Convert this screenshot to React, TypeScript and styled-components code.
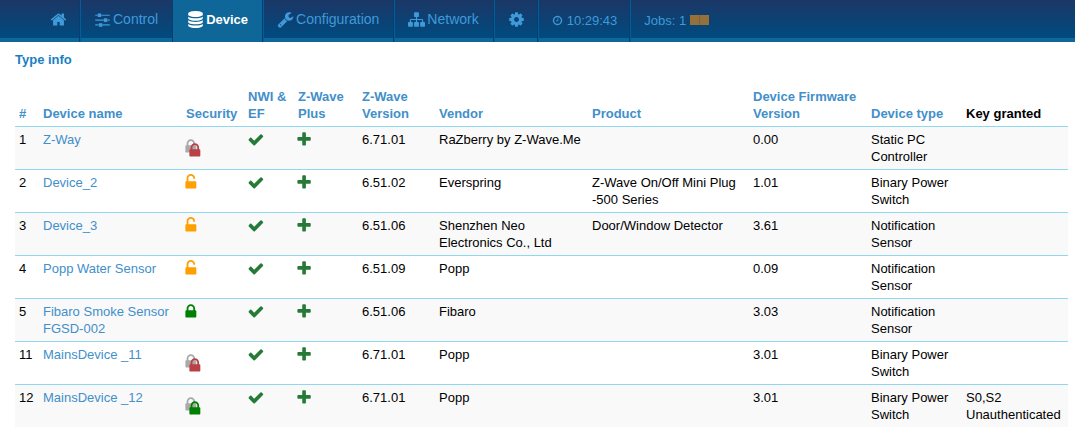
import React from "react";
import styled, { createGlobalStyle } from "styled-components";

const Global = createGlobalStyle`
  *, *::before, *::after { box-sizing: border-box; }
  body {
    margin: 0;
    background: #fff;
    color: #000;
    font-family: "Liberation Sans", Arial, sans-serif;
    font-size: 13px;
    line-height: 17px;
  }
`;

const glyphs = {
  home: "M1472 992v480q0 26-19 45t-45 19h-384v-384h-256v384h-384q-26 0-45-19t-19-45v-480q0-1 .5-3t.5-3l575-474 575 474q1 2 1 6zm223-69l-62 74q-8 9-21 11h-3q-13 0-21-7l-692-577-692 577q-12 8-24 7-13-2-21-11l-62-74q-8-10-7-23.500t11-21.500l719-599q32-26 76-26t76 26l244 204v-195q0-14 9-23t23-9h192q14 0 23 9t9 23v408l219 182q10 8 11 21.500t-7 23.500z",
  sliders: "M480 1408v128h-352v-128h352zm352-128q26 0 45 19t19 45v256q0 26-19 45t-45 19h-256q-26 0-45-19t-19-45v-256q0-26 19-45t45-19h256zm160-384v128h-864v-128h864zm-640-512v128h-224v-128h224zm1312 1024v128h-736v-128h736zm-960-1152q26 0 45 19t19 45v256q0 26-19 45t-45 19h-256q-26 0-45-19t-19-45v-256q0-26 19-45t45-19h256zm640 512q26 0 45 19t19 45v256q0 26-19 45t-45 19h-256q-26 0-45-19t-19-45v-256q0-26 19-45t45-19h256zm320 128v128h-224v-128h224zm0-512v128h-864v-128h864z",
  database: "M896 768q237 0 443-43t325-127v170q0 69-103 128t-280 93.500-385 34.500-385-34.500-280-93.500-103-128v-170q119 84 325 127t443 43zm0 768q237 0 443-43t325-127v170q0 69-103 128t-280 93.500-385 34.500-385-34.500-280-93.500-103-128v-170q119 84 325 127t443 43zm0-384q237 0 443-43t325-127v170q0 69-103 128t-280 93.500-385 34.500-385-34.500-280-93.500-103-128v-170q119 84 325 127t443 43zm0-1152q208 0 385 34.500t280 93.500 103 128v128q0 69-103 128t-280 93.500-385 34.500-385-34.500-280-93.500-103-128v-128q0-69 103-128t280-93.500 385-34.500z",
  wrench: "M448 1472q0-26-19-45t-45-19-45 19-19 45 19 45 45 19 45-19 19-45zm644-420l-682 682q-37 37-90 37-52 0-91-37l-106-108q-38-36-38-90 0-53 38-91l681-681q39 98 114.500 173.500t173.500 114.500zm634-435q0 39-23 106-47 134-164.500 217.500t-258.500 83.500q-185 0-316.500-131.500t-131.500-316.500 131.500-316.500 316.500-131.500q58 0 121.500 16.500t107.500 46.500q16 11 16 28t-16 28l-293 169v224l193 107q5-3 79-48.500t135.500-81 70.500-35.500q15 0 23.500 10t8.500 25z",
  sitemap: "M1792 1248v320q0 40-28 68t-68 28h-320q-40 0-68-28t-28-68v-320q0-40 28-68t68-28h96v-192h-512v192h96q40 0 68 28t28 68v320q0 40-28 68t-68 28h-320q-40 0-68-28t-28-68v-320q0-40 28-68t68-28h96v-192h-512v192h96q40 0 68 28t28 68v320q0 40-28 68t-68 28h-320q-40 0-68-28t-28-68v-320q0-40 28-68t68-28h96v-192q0-52 38-90t90-38h512v-192h-96q-40 0-68-28t-28-68v-320q0-40 28-68t68-28h320q40 0 68 28t28 68v320q0 40-28 68t-68 28h-96v192h512q52 0 90 38t38 90v192h96q40 0 68 28t28 68z",
  cog: "M1152 896q0-106-75-181t-181-75-181 75-75 181 75 181 181 75 181-75 75-181zm512-109v222q0 12-8 23t-20 13l-185 28q-19 54-39 91 35 50 107 138 10 12 10 25t-9 23q-27 37-99 108t-94 71q-12 0-26-9l-138-108q-44 23-91 38-16 136-29 186-7 28-36 28h-222q-14 0-24.500-8.500t-11.500-21.500l-28-184q-49-16-90-37l-141 107q-10 9-25 9-14 0-25-11-126-114-165-168-7-10-7-23 0-12 8-23 15-21 51-66.500t54-70.500q-27-50-41-99l-183-27q-13-2-21-12.500t-8-23.500v-222q0-12 8-23t19-13l186-28q14-46 39-92-40-57-107-138-10-12-10-24 0-10 9-23 26-36 98.500-107.500t94.500-71.500q13 0 26 10l138 107q44-23 91-38 16-136 29-186 7-28 36-28h222q14 0 24.500 8.500t11.500 21.500l28 184q49 16 90 37l142-107q9-9 24-9 13 0 25 10 129 119 165 170 7 8 7 22 0 12-8 23-15 21-51 66.500t-54 70.500q26 50 41 98l183 28q13 2 21 12.500t8 23.500z",
  clock: "M1024 544v448q0 14-9 23t-23 9h-320q-14 0-23-9t-9-23v-64q0-14 9-23t23-9h224v-352q0-14 9-23t23-9h64q14 0 23 9t9 23zm416 352q0-148-73-273t-198-198-273-73-273 73-198 198-73 273 73 273 198 198 273 73 273-73 198-198 73-273zm224 0q0 209-103 385.500t-279.500 279.500-385.500 103-385.500-103-279.500-279.500-103-385.500 103-385.500 279.500-279.500 385.500-103 385.500 103 279.500 279.500 103 385.500z",
  check: "M1671 566q0 40-28 68l-724 724-136 136q-28 28-68 28t-68-28l-136-136-362-362q-28-28-28-68t28-68l136-136q28-28 68-28t68 28l294 295 656-657q28-28 68-28t68 28l136 136q28 28 28 68z",
  plus: "M1600 736v192q0 40-28 68t-68 28h-416v416q0 40-28 68t-68 28h-192q-40 0-68-28t-28-68v-416h-416q-40 0-68-28t-28-68v-192q0-40 28-68t68-28h416v-416q0-40 28-68t68-28h192q40 0 68 28t28 68v416h416q40 0 68 28t28 68z",
  lock: "M640 768h512v-192q0-106-75-181t-181-75-181 75-75 181v192zm832 96v576q0 40-28 68t-68 28h-960q-40 0-68-28t-28-68v-576q0-40 28-68t68-28h32v-192q0-184 132-316t316-132 316 132 132 316v192h32q40 0 68 28t28 68z",
  unlock: "M1376 768q40 0 68 28t28 68v576q0 40-28 68t-68 28h-960q-40 0-68-28t-28-68v-576q0-40 28-68t68-28h32v-320q0-185 131.500-316.500t316.500-131.500 316.500 131.500 131.500 316.500q0 26-19 45t-45 19h-64q-26 0-45-19t-19-45q0-106-75-181t-181-75-181 75-75 181v320h736z",
};

type GlyphName = keyof typeof glyphs;

/* Left edge of the narrower glyphs inside their square. */
const glyphLeft: Partial<Record<GlyphName, number>> = { lock: 384, unlock: 384, plus: 256, check: 64 };

const Svg = styled.svg<{ $size: number; $color: string }>`
  display: block;
  flex: none;
  width: ${(p) => p.$size}px;
  height: ${(p) => p.$size}px;
  fill: ${(p) => p.$color};
`;

interface IconProps {
  name: GlyphName;
  size?: number;
  color?: string;
}

const Icon = ({ name, size = 17, color = "currentColor" }: IconProps) => (
  <Svg $size={size} $color={color} viewBox={`${glyphLeft[name] ?? 0} 0 1792 1792`} overflow="visible" aria-hidden="true">
    <path d={glyphs[name]} />
  </Svg>
);

const NavBar = styled.nav`
  display: flex;
  height: 42px;
  padding-left: 36px;
  border-bottom: 4px solid #0f6698;
  background: linear-gradient(#1b3766, #004b80);
`;

const navItem = `
  display: flex;
  align-items: center;
  flex: none;
  gap: 2px;
  height: 42px;
  padding: 0 14px 4px;
  border-right: 1px solid #063e71;
  box-shadow: 1px 0 #005f9b;
  white-space: nowrap;
`;

const NavLink = styled.a<{ $active?: boolean; $iconOnly?: boolean }>`
  ${navItem}
  ${(p) => p.$iconOnly && "padding-right: 12px;"}
  color: ${(p) => (p.$active ? "#fff" : "#3f9ad9")};
  background: ${(p) => (p.$active ? "#0f6698" : "transparent")};
  font-size: ${(p) => (p.$active ? 13 : 14)}px;
  font-weight: ${(p) => (p.$active ? "bold" : "normal")};
  text-decoration: none;
`;

const NavStatus = styled.span<{ $last?: boolean }>`
  ${navItem}
  gap: 4px;
  padding: 0 12px 2px 14px;
  color: #3f9ad9;
  font-size: 13px;
  ${(p) => p.$last && "border-right: 0; box-shadow: none;"}
`;

const JobBar = styled.span`
  display: flex;
  gap: 1px;
  background: #7a6440;
`;

const JobBlock = styled.span`
  width: 9px;
  height: 10px;
  background: #94703a;
`;

const Content = styled.main`
  padding: 9px 7px 13px 15px;
`;

const Title = styled.h1`
  margin: 0 0 16px;
  color: #1a7fc1;
  font-size: 13px;
  line-height: 17px;
`;

const Table = styled.table`
  width: 100%;
  table-layout: fixed;
  border-collapse: separate;
  border-spacing: 0;
`;

const Col = styled.col<{ $width: number }>`
  width: ${(p) => p.$width}px;
`;

const HeadCell = styled.th`
  padding: 4px;
  text-align: left;
  vertical-align: bottom;
`;

const Row = styled.tr`
  &:nth-child(odd) { background: #f9f9f9; }
`;

const Cell = styled.td`
  height: 43px;
  padding: 4px;
  border-top: 1px solid #8fd8ef;
  vertical-align: top;
`;

const Link = styled.a`
  color: #428fca;
  text-decoration: none;
`;

const LockPair = styled.span`
  display: grid;
  justify-content: start;
  padding-top: 7px;
  svg { grid-area: 1 / 1; }
  svg + svg { margin: 4px 0 0 4px; }
`;

type Security = "failed" | "open" | "secure" | "s2";

const GREEN = "#267a37";

const SecurityMark = ({ kind }: { kind: Security }) => {
  if (kind === "open") return <Icon name="unlock" color="#ff9f00" />;
  if (kind === "secure") return <Icon name="lock" color="#008000" />;
  return (
    <LockPair>
      <Icon name="lock" color="#aaa" />
      <Icon name="lock" color={kind === "s2" ? "#008000" : "#b94045"} />
    </LockPair>
  );
};

interface Device {
  id: number;
  name: string;
  security: Security;
  version: string;
  vendor: string;
  product?: string;
  firmware: string;
  type: string;
  keys?: string;
}

const devices: Device[] = [
  { id: 1, name: "Z-Way", security: "failed", version: "6.71.01", vendor: "RaZberry by Z-Wave.Me", firmware: "0.00", type: "Static PC Controller" },
  { id: 2, name: "Device_2", security: "open", version: "6.51.02", vendor: "Everspring", product: "Z-Wave On/Off Mini Plug -500 Series", firmware: "1.01", type: "Binary Power Switch" },
  { id: 3, name: "Device_3", security: "open", version: "6.51.06", vendor: "Shenzhen Neo Electronics Co., Ltd", product: "Door/Window Detector", firmware: "3.61", type: "Notification Sensor" },
  { id: 4, name: "Popp Water Sensor", security: "open", version: "6.51.09", vendor: "Popp", firmware: "0.09", type: "Notification Sensor" },
  { id: 5, name: "Fibaro Smoke Sensor FGSD-002", security: "secure", version: "6.51.06", vendor: "Fibaro", firmware: "3.03", type: "Notification Sensor" },
  { id: 11, name: "MainsDevice _11", security: "failed", version: "6.71.01", vendor: "Popp", firmware: "3.01", type: "Binary Power Switch" },
  { id: 12, name: "MainsDevice _12", security: "s2", version: "6.71.01", vendor: "Popp", firmware: "3.01", type: "Binary Power Switch", keys: "S0,S2 Unauthenticated" },
];

const columns = [
  { label: "#", width: 24 },
  { label: "Device name", width: 143 },
  { label: "Security", width: 62 },
  { label: "NWI & EF", width: 50 },
  { label: "Z-Wave Plus", width: 64 },
  { label: "Z-Wave Version", width: 77 },
  { label: "Vendor", width: 153 },
  { label: "Product", width: 161 },
  { label: "Device Firmware Version", width: 118 },
  { label: "Device type", width: 95 },
  { label: "Key granted", width: 106, plain: true },
];

const App = () => (
  <>
    <Global />
    <NavBar>
      <NavLink href="#home" aria-label="Home" $iconOnly><Icon name="home" /></NavLink>
      <NavLink href="#control"><Icon name="sliders" />Control</NavLink>
      <NavLink href="#device" $active><Icon name="database" />Device</NavLink>
      <NavLink href="#configuration"><Icon name="wrench" />Configuration</NavLink>
      <NavLink href="#network"><Icon name="sitemap" />Network</NavLink>
      <NavLink href="#settings" aria-label="Settings" $iconOnly><Icon name="cog" /></NavLink>
      <NavStatus><Icon name="clock" size={11} />10:29:43</NavStatus>
      <NavStatus $last>Jobs: 1<JobBar><JobBlock /><JobBlock /></JobBar></NavStatus>
    </NavBar>
    <Content>
      <Title>Type info</Title>
      <Table>
        <colgroup>
          {columns.map((c) => <Col key={c.label} $width={c.width} />)}
        </colgroup>
        <thead>
          <tr>
            {columns.map((c) => (
              <HeadCell key={c.label} scope="col">
                {c.plain ? c.label : <Link href="#sort">{c.label}</Link>}
              </HeadCell>
            ))}
          </tr>
        </thead>
        <tbody>
          {devices.map((d) => (
            <Row key={d.id}>
              <Cell>{d.id}</Cell>
              <Cell><Link href={`#device-${d.id}`}>{d.name}</Link></Cell>
              <Cell><SecurityMark kind={d.security} /></Cell>
              <Cell><Icon name="check" color={GREEN} /></Cell>
              <Cell><Icon name="plus" color={GREEN} /></Cell>
              <Cell>{d.version}</Cell>
              <Cell>{d.vendor}</Cell>
              <Cell>{d.product}</Cell>
              <Cell>{d.firmware}</Cell>
              <Cell>{d.type}</Cell>
              <Cell>{d.keys}</Cell>
            </Row>
          ))}
        </tbody>
      </Table>
    </Content>
  </>
);

export default App;
